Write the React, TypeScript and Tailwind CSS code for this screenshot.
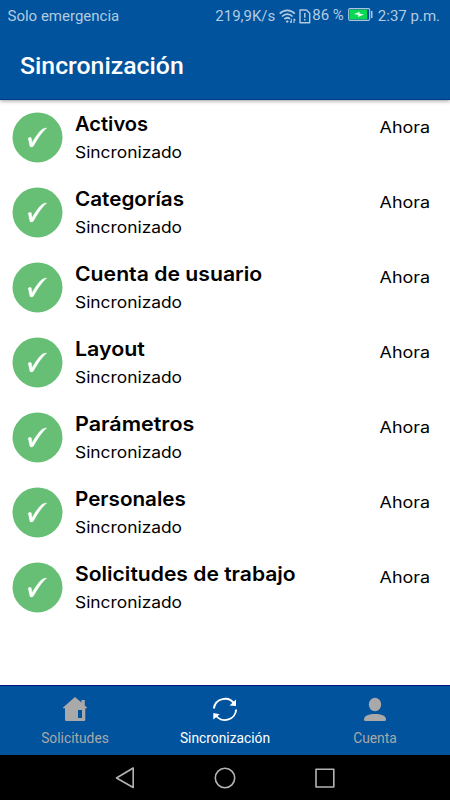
import React from "react";

const items = [
  { title: "Activos", stretch: "scale-x-[1.005]" },
  { title: "Categorías", stretch: "scale-x-[1.034]" },
  { title: "Cuenta de usuario", stretch: "scale-x-[1.06]" },
  { title: "Layout", stretch: "scale-x-[1.07]" },
  { title: "Parámetros", stretch: "scale-x-[1.075]" },
  { title: "Personales", stretch: "scale-x-[1.032]" },
  { title: "Solicitudes de trabajo", stretch: "scale-x-[1.054]" },
];

function StatusBar() {
  return (
    <div className="flex h-8 items-center pl-[7.5px] pr-[10px] text-[15px] leading-8 text-[#b2cbe1]">
      <span>Solo emergencia</span>
      <span className="ml-auto">219,9K/s</span>
      <svg className="ml-1 shrink-0" width="17" height="15" viewBox="0 0 17 15" fill="none" stroke="currentColor">
        <path d="M0.7 4.7C5 0.2 11.5 0.2 15.8 4.7M3 7.5C6 4.4 10.5 4.4 13.6 7.5M5.4 10.2C7.3 8.4 9.3 8.4 11 9.8" strokeWidth="1.7" />
        <path d="M6.6 12.2L8.2 11.2L9.8 12.2L8.2 14Z" fill="currentColor" stroke="none" />
        <path d="M12.3 9.8V14M15 9.8V14M11 12.5L12.3 14M15 9.8L16.4 11.4" strokeWidth="1.1" />
      </svg>
      <svg className="ml-[3px] shrink-0" width="12" height="15" viewBox="0 0 12 15" fill="none" stroke="currentColor">
        <path d="M1 1H7.5L10.7 4.2V13.8H1Z" strokeWidth="1.4" strokeLinejoin="round" />
        <path d="M5.8 4V8.7M5.8 10V11.6" strokeWidth="1.5" />
      </svg>
      <span className="ml-px -mt-[3px]">86 %</span>
      <svg className="ml-1 -mt-[3px] shrink-0" width="25" height="13" viewBox="0 0 25 13">
        <rect x="0.7" y="0.7" width="21" height="11.6" rx="1.2" fill="none" stroke="#a9c4df" strokeWidth="1.2" />
        <rect x="1.6" y="1.6" width="17.6" height="9.8" fill="#08d852" />
        <path d="M6 6L11.8 3.8L11.4 5.6L16 6.5L10 9L10.3 7Z" fill="#e7fff0" />
        <rect x="23" y="3" width="1.5" height="7" fill="#a9c4df" />
      </svg>
      <span className="ml-[5px]">2:37 p.m.</span>
    </div>
  );
}

function Check() {
  return (
    <svg className="shrink-0" width="51" height="51" viewBox="0 0 51 51">
      <circle cx="25.5" cy="25.4" r="25" fill="#66bf74" />
      <path d="M16 26.6C16.800 25.300 19 24.800 19.400 26C19.800 27.200 19.700 29 20 30.700C23.300 25 27.500 18.800 31 16.700C32.200 16 33.500 15.900 34.900 15.900C29.500 20.300 25.200 27.500 21.500 34C20.800 35.300 18.900 35.200 18.100 34.700C17.100 32.800 17.200 29.200 16 26.600Z" fill="#fff" stroke="#fff" strokeWidth="0.2" />
    </svg>
  );
}

function Tab({ label, active, children }: { label: string; active?: boolean; children: React.ReactNode }) {
  return (
    <div className={active ? "flex w-[150px] flex-col items-center text-white" : "flex w-[150px] flex-col items-center text-[#a9a9a9]"}>
      <svg className="mt-[9px]" width="30" height="30" viewBox="0 0 30 30" fill="none">{children}</svg>
      <span className="mt-[3px] text-[13.8px] leading-5">{label}</span>
    </div>
  );
}

export default function App() {
  return (
    <div className="flex h-[800px] w-[450px] flex-col overflow-hidden bg-white font-['Roboto',sans-serif]">
      <header className="relative h-[100px] shrink-0 border-b border-[#003a86] bg-[#00539c] shadow-[0_1px_4px_rgba(0,0,0,0.4)]">
        <StatusBar />
        <h1 className="mt-[18px] pl-5 text-[24.8px] font-medium leading-8 text-white">Sincronización</h1>
      </header>
      <main className="flex-1 font-['Inter',sans-serif] text-black">
        {items.map((item) => (
          <div key={item.title} className="flex h-[75px] pl-3 pr-5 pt-3">
            <Check />
            <div className="ml-3 flex flex-col items-start">
              <span className={`mt-[-2px] origin-left whitespace-nowrap text-[20px] font-semibold leading-7 ${item.stretch}`}>{item.title}</span>
              <span className="mt-[2px] origin-left scale-x-[1.085] text-[16px] leading-6">Sincronizado</span>
            </div>
            <span className="ml-auto mt-[3px] h-6 origin-right scale-x-[1.12] text-[16px] leading-6">Ahora</span>
          </div>
        ))}
      </main>
      <nav className="flex h-[70px] shrink-0 border-t border-[#00127f] bg-[#00539c]">
        <Tab label="Solicitudes">
          <path fillRule="evenodd" clipRule="evenodd" d="M15 2L21.500 7.500V5H24.800V10.500L27 12.500V13.300H25.300V24.500Q25.300 26 23.800 26H6.500Q5 26 5 24.500V13.300H3V12.500ZM18 15V23H22V15Z" fill="currentColor" />
        </Tab>
        <Tab label="Sincronización" active>
          <path d="M3.800 13.500A11.300 11.300 0 0 1 24.500 9M26.200 14.500A11.300 11.300 0 0 1 5.500 20" stroke="currentColor" strokeWidth="1.900" />
          <path d="M26 4.500V11L19.500 10.500ZM3.300 18V24.500L9.800 19.200Z" fill="currentColor" />
        </Tab>
        <Tab label="Cuenta">
          <ellipse cx="15" cy="9.500" rx="6.200" ry="6.700" fill="currentColor" />
          <path d="M4 24.500C4 20.500 9 19 15 19S26 20.500 26 24.500Q26 26 24.500 26H5.500Q4 26 4 24.500Z" fill="currentColor" />
        </Tab>
      </nav>
      <footer className="flex h-[45px] shrink-0 items-center justify-center bg-black">
        <svg width="220" height="24" viewBox="0 0 220 24" fill="none" stroke="#b4b4b4" strokeWidth="1.600" strokeLinejoin="round">
          <path d="M18.200 2V21.500L1.500 12Z" />
          <circle cx="110" cy="12" r="9.700" />
          <rect x="201" y="3.200" width="17.800" height="17.800" />
        </svg>
      </footer>
    </div>
  );
}
